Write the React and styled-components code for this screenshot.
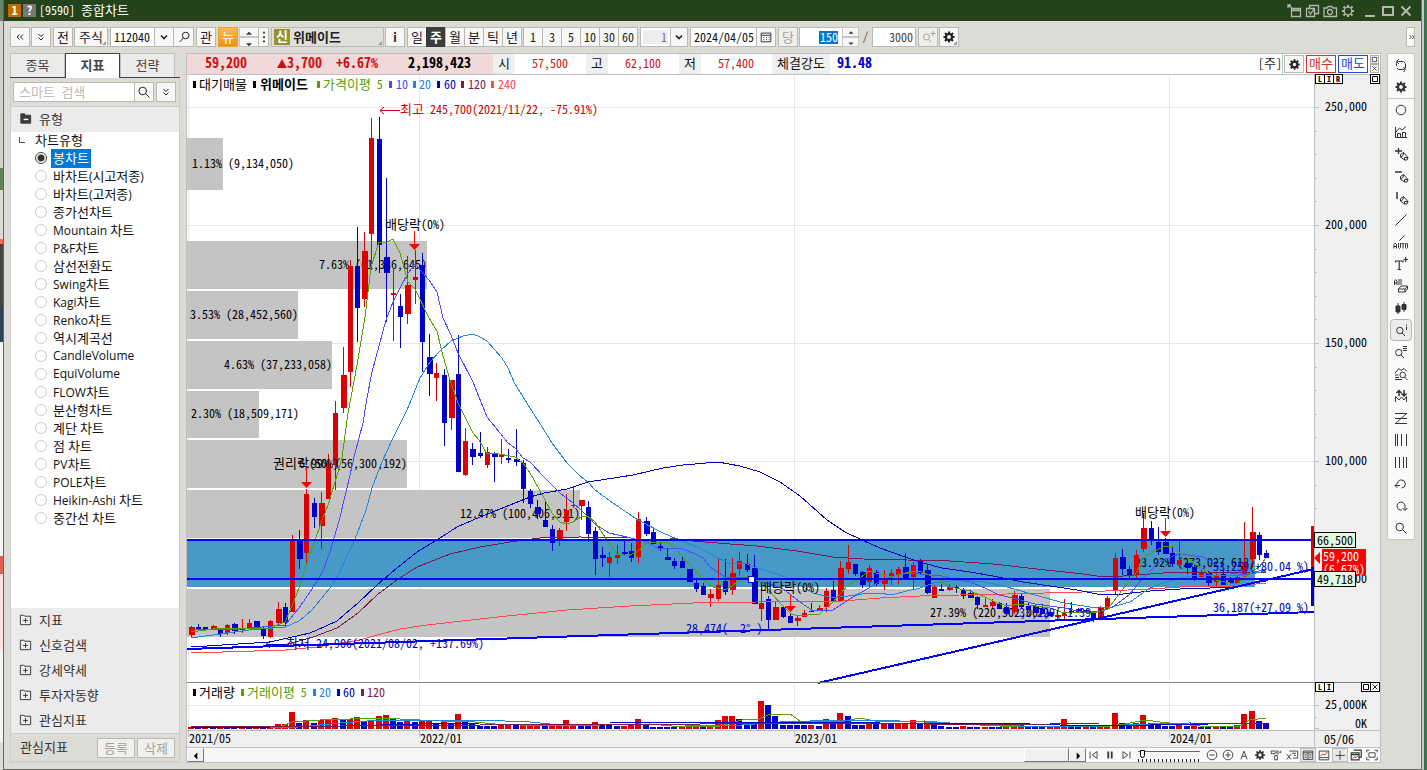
import React from "react";
import styled, { createGlobalStyle, css } from "styled-components";

const CJK = '"Noto Sans CJK KR", sans-serif';

const Global = createGlobalStyle`
  * { box-sizing: border-box; }
  body { margin: 0; background: #dcdbd5; }
  body, button, input, select {
    font-family: ${CJK};
    font-size: 12px;
    font-feature-settings: "hwid";
    color: #222;
  }
  button, input, select { margin: 0; border-radius: 0; padding: 0; }
`;

/* ---------- text: Hangul runs are set one size larger than Latin ---------- */
const Ko = styled.span`font-size: 13px;`;
const KoSvg = styled.tspan`font-size: 13px;`;
const HANGUL = /([\u3131-\uD79D]+)/;
function mix(text, Part = Ko) {
  return text.split(HANGUL).map((s, i) => (i % 2 ? <Part key={i}>{s}</Part> : s));
}

/* ---------- icons ---------- */
const GEAR = (
  <>
    <circle cx="8" cy="8" r="3" fill="none" strokeWidth="2.2" />
    <path strokeWidth="2" d="M8 2.500v2M8 11.500v2M2.500 8h2M11.500 8h2M4 4l1.500 1.500M10.500 10.500L12 12M12 4l-1.500 1.500M5.500 10.500L4 12" />
  </>
);
const PEN = <path d="M7.500 8.500l3-2 4.500 5-1 2.500-2.500 0L7.500 11zM10.500 6.500l-.5 3-2.500 1.500M11.500 14l0-2.500 3.500 0" />;
const ICONS = {
  dleft: <path d="M7.500 5.500L5 8l2.500 2.500M11 5.500L8.500 8l2.500 2.500" />,
  dright: <path d="M6 5.500L8.500 8 6 10.500M9.500 5.500L12 8l-2.500 2.500" />,
  ddown: <path d="M5.500 5L8 7.500 10.500 5M5.500 8.500L8 11l2.500-2.500" />,
  chev: <path strokeWidth="1.600" d="M5 6.500l3 3 3-3" />,
  search: <path d="M10.500 7a3.800 3.800 0 1 1-7.600 0 3.800 3.800 0 0 1 7.600 0M9.500 9.500l4 4" />,
  searchl: <path d="M13 6.500a3.300 3.300 0 1 1-6.600 0A3.300 3.300 0 0 1 13 6.500M7.500 9L3.500 13" />,
  gear: GEAR,
  gearo: (
    <>
      <circle cx="8" cy="8" r="3.800" strokeWidth="1.300" />
      <path strokeWidth="2" d="M8 2v2M8 12v2M2 8h2M12 8h2M3.500 3.500l1.500 1.500M11 11l1.500 1.500M12.500 3.500L11 5M5 11l-1.500 1.500" />
    </>
  ),
  up: <path d="M8 5l4 4H4z" fill="currentColor" stroke="none" />,
  down: <path d="M8 11L4 7h8z" fill="currentColor" stroke="none" />,
  left: <path d="M5.500 8l4-4v8z" fill="#000" stroke="none" />,
  right: <path d="M10.500 8l-4-4v8z" fill="#000" stroke="none" />,
  dots: <path d="M7 2h2v2H7zM7 7h2v2H7zM7 12h2v2H7z" fill="currentColor" stroke="none" />,
  cal: <path d="M2.500 3.500h11v10h-11zM2.500 6h11M5 8.500h1M8 8.500h1M11 8.500h1M5 11h1M8 11h1M11 11h1" />,
  wave: <path d="M9.500 8a3 3 0 1 1-6 0 3 3 0 0 1 6 0M8.500 10.500l3 2.500M10.500 4.500h5M13 2v5" />,
  folderM: <><path d="M3 3h4l1 1.500h5.500V13H3z" fill="#3c3c3c" stroke="#3c3c3c" /><path d="M6 9h5" stroke="#fff" strokeWidth="1.500" /></>,
  folderP: <path d="M2.500 3.500H6l1.500 1h6v9h-11zM8 6.500v5M5.500 9h5" />,
  send: <path strokeWidth="1.300" d="M5.500 5.500h9v8h-9zM5.500 7.500h9M8.500 5.500v2M11.500 5.500v2M6 5L2 2M2 5V2h3" />,
  copycheck: <path strokeWidth="1.300" d="M2.500 5.500h8v8h-8zM5.500 5V2.500h9v8H11M4.500 8l2 3 3.500-5" />,
  camera: <path strokeWidth="1.300" d="M2 5h3l1-1.500h4l1 1.500h3.500v8.500H2zM10.500 9a2.500 2.500 0 1 1-5 0 2.500 2.500 0 0 1 5 0" />,
  min: <path strokeWidth="2" d="M3 13h10" />,
  max: <path strokeWidth="2" d="M3 4h10v8H3z" />,
  close: <path strokeWidth="2" d="M3.500 3.500l9 9M12.500 3.500l-9 9" />,
  refresh: <path d="M3.500 9V6.500q0-2 2-2H10.500l2 2V8M6 2L3.500 4.500 6 7M12.500 7v3q0 2.500-2.500 2.500H5.500L4 11M10.500 10l2 2.500-2 2.500" />,
  circle: <circle cx="8" cy="8" r="4.800" />,
  chartbar: <path d="M2.500 3v10.500h11.500M4.500 13V9.500h3V13M9.500 13V8.500h3V13M3 8l3.500-4 2.500 2 4-3.500" />,
  penplus: <>{PEN}<path d="M2 5h7M5.500 2v6" strokeWidth="1.300" /></>,
  penminus: <>{PEN}<path strokeWidth="1.500" d="M2 4h7" /></>,
  penbar: <>{PEN}<path strokeWidth="1.500" d="M4 2v7" /></>,
  line: <path d="M2.500 13.500l11-11" />,
  auto: (
    <>
      <path d="M6.500 6.500l5-5" />
      <path d="M1 14.500v-4L2.200 9l1.300 1.500v4M1 12.500h2.500M5.500 9v4.500l1 1 1-1V9M8.500 9.500h3M10 9.500v5M12.500 10v3.500l1 1 1-1V10l-1-1z" />
    </>
  ),
  tplus: <path strokeWidth="1.200" d="M2.500 6.500V5h7.500v1.500M6.200 5v8.500M4.500 13.500h3.500M10.500 3.500H15M12.700 1v5" />,
  all: <path d="M1.500 7V3L2.700 1.500 4 3v4M1.500 5H4M6 1v6M8 1v6M5.500 11L8 8h6.500v3l-2.500 3H5.500zM5.500 11H12l2.500-3M12 11v3" />,
  candles: <><path d="M5 3v11M11 2v10" /><path d="M3 6h4v6H3zM9 4.500h4v5H9z" fill="currentColor" /></>,
  magi: <path d="M10 8.500a3.200 3.200 0 1 1-6.400 0 3.200 3.200 0 0 1 6.400 0M9 11l3 3M13.500 2.500v1M13.500 4.500v3.500" />,
  maglist: <path d="M9 8.500a3.200 3.200 0 1 1-6.400 0 3.200 3.200 0 0 1 6.400 0M8 11l3 3M10 2.500h4M10 4.500h4M10 6.500h4" />,
  magchart: <path d="M2 7l4-4.500 2 2 3-2 3 3M12.500 9a2.800 2.800 0 1 1-5.600 0 2.800 2.800 0 0 1 5.600 0M11.500 11l3 3M2 9h3M2 11.500h4M2 13.500h7" />,
  updown: <><path d="M6 8V2.500M3.500 5L6 2.500 8.500 5M11 2v5.500M8.500 5.500L11 8l2.500-2.500" strokeWidth="1.500" /><path d="M2.500 14V8.500l3.500 3.500 2.500-3 2.500 3 2.500-3.500V14" /></>,
  fibz: <path d="M2 3.500h12M2 8.500h12M2 13.500h12M13.500 3.500l-11 10" />,
  bars3: <path d="M2.500 2v12M4.500 2v12M8.500 2v12M13.500 2v12" />,
  bars4: <path d="M2.500 3v11M6.500 3v11M10.500 3v11M13.500 3v11" />,
  undo: <path d="M4.500 7a4 4 0 1 1 4 5M2 9.500h5M4.500 7L2 9.500 4.500 12" />,
  redo: <path d="M9 12a4 4 0 1 1 3-4.500V12M9.500 10l2.500 2.500L14.500 10" />,
  first: <path d="M3.500 4v8M11.500 4v8L6 8z" />,
  pause: <path strokeWidth="2" d="M6 4v8M10 4v8" />,
  last: <path d="M12.500 4v8M4.500 4v8L10 8z" />,
  minus: <path d="M13.500 8a5.500 5.500 0 1 1-11 0 5.500 5.500 0 0 1 11 0M5 8h6" />,
  plus: <path d="M13.500 8a5.500 5.500 0 1 1-11 0 5.500 5.500 0 0 1 11 0M5 8h6M8 5v6" />,
  letterA: <path d="M4.500 13L8 3.500l3.500 9.500M6 9.500h4" />,
  hammer: <path d="M2.500 3.500h8l2 2M2.500 3.500v3h4v-1h4v2M6.500 8.500h3v5h-3zM13.500 3v3" />,
  win: <path d="M5 3.500h9.500v8H9M2 7l5 6M7 7l-5 6M8 6h4.500M10 8.500h2.500" />,
  table: <path d="M2.500 3.500h11v9.500h-11zM2.500 5.500h11M8 5.500V13M4 8h2.500M4 10.500h2.500M9.500 8H12M9.500 10.500H12" />,
  miniChart: <><path d="M2.500 3.500h11v10h-11z" /><path d="M4 9l2.500-2 2 1 4-4" stroke="#d00000" /><path d="M3 11h10" /></>,
  cross: <path d="M8 3v10.500M3 8.500h10.500" />,
  layers: <><path d="M5.500 2.500h8.500v8h-2M2.500 5.500h9v8h-9zM2.500 7.500h9" strokeWidth="1.300" /><path d="M4 12l2-2 2 1 2-2" stroke="#d00000" /></>,
  full: <path d="M4.500 5.500h7v5h-7zM2 5V2.500h3M11 2.500h3V5M2 10.500v3h3M11 13.500h3v-3" />,
  box: <path strokeWidth="2" d="M3 3h10v10H3z" />,
  x: <path strokeWidth="1.800" d="M3 3l10 10M13 3L3 13" />,
};
const Svg = styled.svg`
  width: ${(p) => p.$s}px;
  height: ${(p) => p.$s}px;
  flex: none;
  display: block;
  fill: none;
  stroke: currentColor;
`;
function Icon({ n, s = 16 }) {
  return <Svg $s={s} viewBox="0 0 16 16" aria-hidden="true">{ICONS[n]}</Svg>;
}

/* ---------- window frame ---------- */
const Desktop = styled.div`
  display: flex;
  min-height: 100vh;
`;
const LeftEdge = styled.div`
  width: 4px;
  border-right: 1px solid #66665f;
  background: linear-gradient(
    #6b8468 0 21px, #d4d2cc 21px 168px, #5f8257 168px 190px, #dcdbd5 190px 239px,
    #ff6a50 239px 244px, #444 244px 306px, #2c4257 306px 342px, #f4f4f4 342px 556px,
    #e06050 556px 574px, #ffe4e4 574px 650px, #f4f4f4 650px 742px, #dcdbd5 742px
  );
`;
const RightEdge = styled.div`
  width: 6px;
  background: linear-gradient(90deg, #6e6e6e 0 1px, #c6c8cc 1px 3px, #5a5a60 3px 4px, #0f9447 4px);
`;
const Window = styled.div`
  flex: 1;
  min-width: 0;
  display: flex;
  flex-direction: column;
  background: #dcdbd5;
  border-bottom: 1px solid #66665f;
`;
const TitleBar = styled.header`
  height: 21px;
  display: flex;
  align-items: center;
  gap: 2px;
  padding: 0 7px 0 4px;
  background: #24431b;
  color: #fff;
`;
const Tag = styled.span`
  width: 13px;
  height: 13px;
  line-height: 12px;
  text-align: center;
  font-weight: 700;
  color: #fff;
  background: ${(p) => p.$bg};
`;
const Title = styled.h1`
  margin: 0 auto 0 1px;
  padding-bottom: 2px;
  font-size: 12px;
  font-weight: 400;
`;
const TitleBtn = styled.button`
  display: grid;
  place-items: center;
  width: 16px;
  height: 16px;
  border: 0;
  background: none;
  color: #b4b9b0;
`;
const Spacer = styled.span`width: ${(p) => p.$w}px; flex: none;`;

/* ---------- toolbar ---------- */
const Toolbar = styled.div`
  height: 32px;
  padding: 6px 6px;
  display: flex;
  gap: 1px;
  > :last-child { margin-left: auto; }
`;
const Btn = styled.button`
  position: relative;
  display: flex;
  align-items: center;
  justify-content: center;
  flex: none;
  width: ${(p) => p.$w || 20}px;
  height: ${(p) => p.$h || 20}px;
  padding-bottom: ${(p) => (p["aria-label"] ? 0 : 1)}px;
  border: 1px solid #b9b9b4;
  background: #f7f7f7;
  color: #222;
  ${(p) => p.$dim && css`color: #a5a295; background: #efefee;`}
  ${(p) => p.$orange && css`color: #fff; border-color: #e8a030; background: linear-gradient(#fbb95a, #ee9208);`}
  ${(p) => p.$left && css`justify-content: flex-start; padding-left: 2px; font-weight: 700; gap: 3px; background: #e0dfda;`}
  ${(p) => p.$corner && css`
    &::after {
      content: "";
      position: absolute;
      right: 1px;
      bottom: 1px;
      border: 2px solid transparent;
      border-right-color: #999;
      border-bottom-color: #999;
    }
  `}
`;
const Group = styled.div`
  display: flex;
  flex: none;
  margin: 0 ${(p) => p.$r || 0}px 0 ${(p) => p.$l || 0}px;
  > * + * { margin-left: -1px; }
`;
const Seg = styled(Btn)`
  padding-bottom: 1px;
  ${(p) => p.$on && css`background: #3c3c3c; border-color: #3c3c3c; color: #fff; font-weight: 700;`}
`;
const Field = styled.input`
  width: ${(p) => p.$w}px;
  height: 20px;
  padding: 0 2px 2px 3px;
  border: 1px solid #b9b9b4;
  background: #fff;
  color: ${(p) => p.$color || "#111"};
  text-align: ${(p) => (p.$right ? "right" : "left")};
`;
const SelectedField = styled.label`
  display: flex;
  justify-content: flex-end;
  align-items: center;
  width: 44px;
  height: 20px;
  padding-right: 4px;
  border: 1px solid #b9b9b4;
  background: #fff;
  input {
    width: 19px;
    height: 13px;
    padding-bottom: 1px;
    border: 0;
    background: #0078d7;
    color: #fff;
    text-align: right;
  }
`;
const NumSelect = styled.select`
  appearance: none;
  width: 31px;
  height: 20px;
  padding: 0 4px 1px 20px;
  border: 1px solid #b9b9b4;
  outline: 2px solid #fff;
  outline-offset: -3px;
  background: #ededed;
  color: #777;
`;
const Spin = styled.div`
  display: grid;
  grid-template-rows: 10px 10px;
  width: ${(p) => p.$w}px;
  button {
    display: grid;
    place-items: center;
    overflow: hidden;
    border: 1px solid #c6c6c2;
    background: #f7f7f7;
    color: #333;
  }
`;
const Badge = styled.span`
  width: 16px;
  height: 16px;
  line-height: 14px;
  text-align: center;
  color: #fff;
  background: #97912f;
`;
const Slash = styled.span`
  width: 11px;
  text-align: center;
  line-height: 18px;
  color: #555;
`;

/* ---------- body ---------- */
const Body = styled.div`
  flex: 1;
  display: flex;
  gap: 6px;
  padding: 0 6px 6px;
  align-items: stretch;
`;
const Sidebar = styled.aside`
  flex: none;
  width: 170px;
  display: flex;
  flex-direction: column;
  color: #333;
`;
const Tabs = styled.div`
  height: 25px;
  display: flex;
  border-bottom: 1px solid #444;
`;
const Tab = styled.button`
  width: 55px;
  height: ${(p) => (p.$on ? 25 : 24)}px;
  padding-bottom: 3px;
  border: 1px solid ${(p) => (p.$on ? "#444" : "#c0c0bc")};
  border-bottom: 0;
  background: ${(p) => (p.$on ? "#fff" : "#ebebeb")};
  color: #444;
  font-weight: ${(p) => (p.$on ? 700 : 400)};
`;
const SearchRow = styled.div`
  height: 28px;
  padding: 4px 3px 4px 2px;
  display: flex;
  border: 1px solid #ccc;
  border-width: 0 1px;
  > :last-child { margin-left: 2px; }
  input { flex: 1; min-width: 0; padding-left: 5px; border-right: 0; }
  input::placeholder { color: #bbb; font-size: 13px; opacity: 1; }
`;
const Section = styled.button`
  display: flex;
  align-items: center;
  gap: 6px;
  flex: none;
  width: 100%;
  height: ${(p) => (p.$open ? 26 : 25)}px;
  padding: 0 0 2px 7px;
  border: 1px solid #ccc;
  border-width: ${(p) => (p.$open ? "1px 1px 0" : "0 1px")};
  background: #ebebeb;
  color: #333;
`;
const Tree = styled.div`
  flex: 1;
  padding-left: 24px;
  border: 1px solid #ccc;
  border-width: 0 1px;
  background: #fff;
  font-family: "Open Sans", ${CJK};
  font-feature-settings: normal;
  color: #111;
`;
const TreeHead = styled.div`
  position: relative;
  height: 17px;
  line-height: 16px;
  &::before {
    content: "";
    position: absolute;
    left: -16px;
    top: 5px;
    width: 5px;
    height: 5px;
    border: 1px solid #555;
    border-width: 0 0 1px 1px;
  }
`;
const Option = styled.label`
  display: flex;
  align-items: center;
  height: 18px;
  gap: 4px;
  line-height: 18px;
  input {
    appearance: none;
    width: 12px;
    height: 12px;
    border: 1px solid #ccc;
    border-radius: 50%;
    background: #fff;
  }
  input:checked {
    border-color: #444;
    background: radial-gradient(circle, #333 0 3px, #fff 4px);
  }
  input:checked + span { background: #0078d7; color: #fff; }
  > span { padding: 0 2px; white-space: nowrap; }
`;
const Foot = styled.div`
  height: 30px;
  display: flex;
  align-items: center;
  gap: 2px;
  padding: 0 4px 0 9px;
  border: 1px solid #ccc;
  border-bottom: 2px solid #d0d0cc;
  > :first-child { margin-right: auto; padding-bottom: 2px; }
`;

const Main = styled.main`
  flex: 1;
  min-width: 0;
  display: flex;
  flex-direction: column;
  border: 1px solid #c0c0c0;
  background: #fff;
`;
const InfoBar = styled.div`
  display: flex;
  height: 21px;
  line-height: 17px;
  border-bottom: 1px solid #c0c0c0;
  white-space: nowrap;
`;
const Quote = styled.div`
  display: flex;
  flex: none;
  width: 306px;
  background: #f2d9d9;
  font-size: 14px;
  font-weight: 700;
`;
const QuoteCell = styled.span`
  width: ${(p) => p.$w}px;
  text-align: right;
  color: ${(p) => (p.$black ? "#000" : "#d01010")};
`;
const Tri = styled.i`
  display: inline-block;
  border: 5px solid transparent;
  border-top: 0;
  border-bottom: 9px solid #d01010;
`;
const Head = styled.span`
  flex: none;
  width: ${(p) => p.$w || 22}px;
  text-align: center;
  background: #efefef;
  color: #111;
`;
const Val = styled.span`
  flex: none;
  width: 71px;
  padding-right: 18px;
  text-align: right;
  color: #d01010;
`;
const Strength = styled.span`
  margin: 0 auto 0 7px;
  font-size: 14px;
  font-weight: 700;
  color: #0000c8;
`;
const Actions = styled.div`
  display: flex;
  gap: 2px;
  padding: 1px;
  border-left: 1px solid #c0c0c0;
`;
const Order = styled.button`
  width: 30px;
  height: 18px;
  line-height: 14px;
  padding-bottom: 2px;
  border: 1px solid currentColor;
  background: #fff;
  color: ${(p) => p.$c};
`;
const Mini = styled.div`
  display: grid;
  grid-template-rows: 9px 9px;
  button {
    display: grid;
    place-items: center;
    width: 9px;
    border: 1px solid #aaa;
    background: #fff;
    color: #333;
  }
`;

const ChartArea = styled.div`
  position: relative;
  flex: 1;
  > svg { display: block; width: 100%; height: auto; }
`;
const Plot = styled.svg`
  text { font-family: ${CJK}; font-size: 12px; font-feature-settings: "hwid"; white-space: pre; }
`;
const PaneBtns = styled.div`
  position: absolute;
  right: ${(p) => p.$right};
  top: ${(p) => p.$top}px;
  display: flex;
  button {
    display: grid;
    place-items: center;
    width: 10px;
    height: 10px;
    border: 1px solid #000;
    background: #fff;
    color: #000;
    font-size: 8px;
    font-weight: 700;
    line-height: 8px;
  }
  button + button { margin-left: -1px; }
`;

const ScrollRow = styled.div`
  height: 14px;
  display: flex;
`;
const ScrollBtn = styled.button`
  display: grid;
  place-items: center;
  overflow: hidden;
  width: 17px;
  border: 1px solid #fff;
  border-right-color: #777;
  border-bottom-color: #777;
  background: #f0f0f0;
`;
const Track = styled.div`
  flex: 1;
  display: flex;
  justify-content: flex-end;
  background: #f6f6f6;
`;
const Thumb = styled.div`
  width: 45px;
  border: 1px solid #fff;
  border-right-color: #777;
  border-bottom-color: #777;
  background: #f0f0f0;
`;
const ToolBtn = styled.button`
  display: grid;
  place-items: center;
  overflow: hidden;
  width: 16px;
  border: 0;
  background: ${(p) => (p.$on ? "#e9e9e9" : "#fafafa")};
  box-shadow: ${(p) => (p.$on ? "inset 0 0 0 1px #bbb" : "none")};
  color: #333;
`;
const SlideWrap = styled.label`
  width: 70px;
  padding: 2px 4px 0;
  background: #fafafa;
  input {
    appearance: none;
    display: block;
    width: 62px;
    height: 12px;
    background:
      linear-gradient(#666, #666) 0 1px / 100% 1px no-repeat,
      repeating-linear-gradient(90deg, #222 0 1px, transparent 1px 4px) 0 100% / 100% 3px no-repeat;
  }
  input::-webkit-slider-thumb {
    appearance: none;
    width: 5px;
    height: 8px;
    margin-bottom: 4px;
    border: 1px solid #000;
    border-radius: 0 0 3px 3px;
    background: #fff;
  }
`;

const Rail = styled.nav`
  flex: none;
  align-self: flex-start;
  width: 28px;
  border: 1px solid #c6c6c2;
  background: #fafafa;
  display: flex;
  flex-direction: column;
  align-items: center;
`;
const RailBtn = styled.button`
  display: grid;
  place-items: center;
  width: ${(p) => (p.$on ? 22 : 26)}px;
  height: 22px;
  border: ${(p) => (p.$on ? "1px solid #b4b4b4" : "0")};
  border-radius: ${(p) => (p.$on ? 4 : 0)}px;
  background: ${(p) => (p.$on ? "#ececec" : "none")};
  color: #333;
`;
const RailLine = styled.hr`
  width: 100%;
  margin: 0;
  border: 0;
  border-top: 1px solid #c6c6c2;
`;

/* ---------- chart data: colour, high, body top, body bottom, low ---------- */
const CANDLES = `R626,627,635,637 B624,627,629,629 B627,627,629,630 R625,626,629,630 B628,628,634,637 R624,625,633,635 B623,624,631,634 R619,628,630,633 R619,623,628,630 B621,621,628,629
B627,628,636,639 R620,621,637,638 R602,609,623,624 B603,607,622,627 R535,540,612,612 B530,540,559,569 R489,494,553,563 B498,503,517,528 R492,503,526,549 R454,464,499,499
R401,413,465,490 R347,375,408,413 R260,266,372,387 B227,266,308,342 R232,251,299,307 R118,138,234,270 B117,139,245,273 B178,257,273,322 R268,293,295,341 B294,306,317,348
R256,285,314,324 R250,277,280,304 B253,265,342,372 B334,357,374,396 R363,373,378,401 B369,375,423,446 R380,380,418,430 B335,374,472,472 R428,441,475,476 B443,449,457,465
B432,453,456,458 R447,452,465,468 B452,453,457,482 R439,455,457,464 B449,458,460,463 B429,459,462,466 B460,463,489,503 B489,491,504,508 B500,507,514,519 B501,520,527,527
B525,529,543,551 R528,530,539,546 R494,510,522,531 R487,505,506,508 R500,500,506,520 B501,507,534,542 B527,531,559,575 B547,555,558,567 R552,557,563,577 R545,555,558,564
B540,552,554,556 B543,551,558,562 R512,519,557,563 B517,521,534,536 B528,532,544,544 B542,546,549,551 B549,557,560,560 B558,561,566,569 B557,561,568,568 B569,569,582,582
B580,583,589,592 B583,586,595,595 R589,594,598,607 R558,585,599,601 B559,581,592,595 R558,573,590,595 R552,561,569,576 B554,564,570,572 B555,568,604,604 R587,603,609,621
B596,599,620,630 R602,607,620,620 B606,607,617,618 B614,616,623,623 R615,618,621,626 R610,613,617,617 B603,611,612,612 R605,608,610,610 R588,591,607,612 B581,590,601,601
R561,568,601,601 R545,562,569,574 B564,564,574,576 B571,572,585,588 R565,568,582,587 B570,572,584,586 R570,580,584,590 R569,573,577,585 R567,569,575,584 B553,567,578,578
R562,565,577,589 B559,560,573,574 B564,570,593,594 R585,587,598,598 B584,589,591,591 R584,587,590,591 B585,587,588,593 B588,590,596,599 B590,593,598,598 B596,597,605,609
R597,605,607,607 R599,602,606,608 B602,603,609,609 B603,607,614,614 R591,595,612,614 B593,596,607,609 B603,606,610,610 B604,606,613,613 B604,609,614,614 B611,612,616,616
R610,615,617,620 R599,614,616,619 B602,611,612,614 B608,609,612,612 B609,610,612,612 B611,613,619,622 R606,608,617,617 R596,598,609,609 R553,558,591,594 B549,557,569,575
B566,569,576,578 R550,555,575,580 R513,528,549,552 B521,528,540,545 B527,542,552,555 B538,542,554,554 B546,553,564,567 R541,560,565,565 B560,563,568,574 B565,567,578,581
R570,573,577,577 B571,573,583,586 R572,575,582,586 B571,574,585,585 B577,579,583,583 R575,577,583,583 R522,562,575,577 R507,532,559,567 B532,535,555,560 B550,553,558,558`
  .split(/\s+/)
  .map((s) => [s[0], ...s.slice(1).split(",").map(Number)]);

const VOLUME = `R2 B2 R2 B2 R2 B2 B2 R2 B2 R2 B2 R2 R5 R5 R17 B6 R9 B6 R9 R10 R11 B10 R10 R12 B8 R9 R13 R14 B10 B7 R9 B7 R8 R8 B6 R9 B6 R15 B9 B5
B3 B3 B3 R5 R5 B4 R4 R4 R4 B4 R5 R4 R9 R5 B4 B4 R7 B5 B5 B3 R3 R5 R10 B5 B2 B2 B2 B2 R2 R2 R2 B2 R3 R9 R13 R13 B10 B6 B6 R28
B24 B13 B4 B4 B4 B4 R4 B3 R10 B7 R16 B13 B4 B4 R7 B6 R6 B6 R6 R6 R9 B6 R8 B4 B3 B2 B2 R3 B2 B2 R2 B2 B2 R2 R2 R4 B2 B2 B2 R2
R3 R10 B3 B2 R2 B2 R2 R3 R16 B6 B3 R6 R14 B6 B6 B3 B3 R4 B3 R3 B2 B2 R2 B2 B2 R4 R15 R18 B8 B6`
  .split(/\s+/)
  .map((s) => [s[0], Number(s.slice(1))]);

const xAt = (i) => Math.round(191 + i * 7.215);
const tone = (c) => (c === "R" ? "#dc0000" : "#0000c8");

const GREEN = "#57a000", VIOLET = "#4b4bff", SKY = "#1e87d7", NAVY = "#0000c8", WINE = "#7a1b50", CORAL = "#ff4848";

const PRICE_LINES = [
  [CORAL, "191,653 285,650 317,647 360,640 377,635 400,629 427,625 480,619 507,616 567,610 630,606 693,603 757,602 843,601 880,598 920,596 960,595 1007,594 1083,592 1150,589 1180,587 1237,586 1266,583"],
  [WINE, "285,645 313,637 337,628 358,613 377,595 397,580 417,567 450,554 480,547 510,542 540,538 580,537 627,538 670,538 693,541 730,544 757,546 797,551 833,557 863,559 907,560 950,561 993,564 1037,569 1083,574 1097,576 1123,576 1163,573 1266,572"],
  [NAVY, "191,647 270,642 310,633 317,630 337,621 358,603 377,585 397,568 417,552 440,538 457,527 480,517 515,503 530,497 544,493 567,489 588,482 633,475 663,468 683,465 718,462 740,466 760,472 780,482 800,496 827,520 845,532 862,540 880,548 905,557 923,563 942,568 970,572 993,576 1023,582 1050,586 1077,590 1097,594 1123,594 1150,591 1180,589 1210,588 1233,587 1266,581"],
  [SKY, "191,638 220,634 249,630 285,627 299,621 312,610 330,588 338,575 350,550 355,539 366,510 372,488 382,462 393,438 407,410 420,378 430,362 440,351 451,341 463,336 473,334 480,337 487,341 502,358 508,368 515,384 530,408 544,430 552,443 567,463 580,476 588,482 595,490 613,503 638,520 663,533 677,539 697,547 713,555 728,563 747,564 754,567 780,575 797,583 813,593 833,598 848,596 862,594 880,593 891,595 907,591 920,588 934,583 960,580 985,582 1007,587 1035,595 1064,603 1090,607 1108,608 1130,602 1150,588 1163,583 1180,578 1197,575 1245,575 1266,571"],
  [VIOLET, "191,629 240,629 285,625 299,608 310,592 322,573 330,552 339,521 347,488 355,453 363,423 367,398 372,372 386,320 393,302 400,288 408,273 415,264 422,272 429,280 437,292 443,318 451,335 458,353 473,382 487,417 500,433 508,443 515,448 523,458 530,462 544,477 560,493 573,503 581,510 595,524 609,533 627,537 647,542 657,548 680,548 693,553 703,558 710,567 725,577 750,578 763,582 782,588 800,602 813,611 833,610 848,600 862,592 877,583 891,577 905,573 920,574 942,576 957,580 970,582 985,588 999,595 1013,598 1035,604 1064,608 1078,611 1100,612 1113,607 1129,595 1143,578 1158,563 1173,556 1180,554 1203,557 1217,565 1230,573 1245,575 1266,569"],
  [GREEN, "191,632 213,629 234,628 270,628 277,625 285,622 292,606 299,588 308,560 314,543 321,523 328,505 335,482 342,458 348,413 357,365 365,317 371,267 379,242 387,242 393,239 400,253 408,282 415,289 429,318 437,331 442,352 450,380 458,403 473,433 479,440 487,454 494,453 515,457 523,463 530,473 544,498 552,513 560,522 567,524 573,522 581,517 588,516 595,522 609,543 617,554 627,556 637,552 646,544 653,542 667,542 675,548 689,564 703,579 713,587 725,590 732,586 740,580 747,576 754,579 763,583 773,595 783,606 790,613 797,616 820,614 826,608 833,602 840,594 848,585 860,578 869,571 880,574 890,577 905,573 920,571 934,577 950,587 970,591 985,597 997,603 1007,606 1021,604 1035,606 1050,608 1064,613 1097,612 1108,609 1122,590 1135,575 1144,557 1153,552 1165,546 1173,546 1180,553 1194,563 1209,574 1216,580 1230,583 1238,583 1245,577 1259,567 1266,558"],
];
const VOLUME_LINES = [
  [GREEN, "191,728 280,727 292,722 320,720 380,718 420,720 440,721 475,722 495,724 520,725 600,725 650,724 672,726 720,726 735,722 745,719 757,720 770,714 790,714 800,721 840,722 860,718 880,722 925,721 960,724 1000,726 1110,726 1125,724 1145,720 1160,722 1180,724 1200,726 1240,726 1250,720 1266,718"],
  [SKY, "191,728 300,727 340,723 380,720 480,720 530,722 560,725 640,724 730,726 780,722 840,720 900,721 950,723 1020,726 1100,726 1150,724 1190,723 1266,724"],
  [NAVY, "191,727 270,727 340,726 420,724 480,723 610,723 760,722 880,723 1000,723 1060,725 1150,725 1266,723"],
  [WINE, "191,727 340,726 480,725 700,724 860,723 1000,725 1100,723 1190,723 1266,723"],
];

const BANDS = [
  [138, 52, 223, 192, 168, "1.13% (9,134,050)"],
  [241, 48, 427, 319, 269, "7.63% (61,386,645)"],
  [291, 48, 298, 190, 319, "3.53% (28,452,560)"],
  [341, 48, 332, 224, 369, "4.63% (37,233,058)"],
  [391, 47, 259, 191, 418, "2.30% (18,509,171)"],
  [440, 48, 407, 299, 468, "6.99% (56,300,192)"],
  [490, 48, 580, 460, 518, "12.47% (100,406,911)"],
  [589, 48, 1050, 930, 617, "27.39% (220,502,067)"],
];
const LEGEND = [
  [193, 199, "대기매물", "#000"],
  [253, 260, "위메이드", "#000", 700],
  [317, 323, "가격이평 5", GREEN],
  [389, 396, "10", VIOLET],
  [413, 419, "20", SKY],
  [437, 444, "60", NAVY],
  [461, 468, "120", WINE],
  [491, 498, "240", CORAL],
];
const VLEGEND = [
  [193, 199, "거래량", "#000"],
  [241, 247, "거래이평 5", GREEN],
  [313, 319, "20", SKY],
  [337, 343, "60", NAVY],
  [361, 367, "120", WINE],
];
const EVENTS = [
  [273, 468, "권리락(50%)", 306, 467, 488],
  [385, 229, "배당락(0%)", 414, 231, 250],
  [760, 592, "배당락(0%)", 790, 594, 612],
  [1135, 517, "배당락(0%)", 1165, 518, 537],
];

function Legend({ items, y }) {
  return items.map(([sx, tx, t, c, w]) => (
    <g key={t} fill={c}>
      <rect x={sx} y={y - 8} width="3" height="7" />
      <text x={tx} y={y} fontWeight={w}>{mix(t, KoSvg)}</text>
    </g>
  ));
}

function Chart() {
  const years = [188, 419, 794, 1169];
  return (
    <Plot viewBox="187 75 1193 673" role="img" aria-label="위메이드 주봉 차트">
      <rect x="187" y="75" width="1193" height="673" fill="#fff" />
      <rect x="1314" y="75" width="66" height="673" fill="#efefef" />
      <rect x="187" y="730" width="1193" height="18" fill="#efefef" />
      <g fill="#e6e6e6">
        {[107, 225, 343, 461, 705].map((y) => <rect key={y} x="188" y={y} width="1126" height="1" />)}
        {years.map((x) => (
          <React.Fragment key={x}>
            <rect x={x} y="76" width="1" height="604" />
            <rect x={x} y="684" width="1" height="46" />
          </React.Fragment>
        ))}
      </g>
      <g fill="#c4c4c4">
        {BANDS.map(([y, h, r]) => <rect key={y} x="187" y={y} width={r - 187} height={h} />)}
      </g>
      <rect x="187" y="541" width="1068" height="46" fill="#4899c8" />
      <g fill="#000">
        {BANDS.map(([y, , , tx, ty, t]) => <text key={y} x={tx} y={ty}>{t}</text>)}
        <text x="1135" y="567">23.92% (273,027,618)</text>
      </g>
      <g shapeRendering="crispEdges">
        {CANDLES.map(([c, h, t, b, l], i) => (
          <g key={i} fill={tone(c)}>
            <rect x={xAt(i)} y={h} width="1" height={Math.max(1, l - h)} />
            <rect x={xAt(i) - 2} y={t} width={i % 3 ? 5 : 6} height={Math.max(1, b - t)} />
          </g>
        ))}
        {PRICE_LINES.map(([c, pts]) => <polyline key={c} points={pts} fill="none" stroke={c} />)}
        {VOLUME.map(([c, h], i) => (
          <rect key={i} x={xAt(i) - 3} y={729 - h} width="6" height={h} fill={tone(c)} />
        ))}
        {VOLUME_LINES.map(([c, pts]) => <polyline key={c} points={pts} fill="none" stroke={c} />)}
        <g stroke="#0000ff" strokeWidth="2">
          <path d="M187 540H1314M187 579H1314" />
          <path d="M187 649L1314 612M818 683L1314 569" />
        </g>
        <rect x="748" y="576" width="6" height="6" fill="#fff" stroke="#0000ff" />
        <rect x="1311" y="526" width="3" height="41" fill="#dc0000" />
        <rect x="1311" y="567" width="3" height="39" fill="#0000c8" />
      </g>
      {EVENTS.map(([tx, ty, t, ax, a0, a1]) => (
        <g key={tx}>
          <text x={tx} y={ty}>{mix(t, KoSvg)}</text>
          <path d={`M${ax} ${a0}h1v${a1 - a0 - 6}h5l-5.500 6-5.500-6h5z`} fill="#ff0000" />
        </g>
      ))}
      <Legend items={LEGEND} y={89} />
      <Legend items={VLEGEND} y={697} />
      <g fill="#d00000">
        <path d="M380 110.500H400M384 107l-4 3.500 4 3.500" fill="none" stroke="#d00000" />
        <text x="400" y="114">{mix("최고 245,700(2021/11/22, -75.91%)", KoSvg)}</text>
      </g>
      <g fill="#0000c8">
        <path d="M266 644.500H286M270 641l-4 3.500 4 3.500" fill="none" stroke="#0000c8" />
        <text x="286" y="648">{mix("최저 24,906(2021/08/02, +137.69%)", KoSvg)}</text>
        <text x="686" y="633">{"28,474(  2"}<tspan dx="0">°</tspan>{" )"}</text>
        <text x="1019" y="617">33,229(-1.39 )</text>
        <text x="1213" y="571">53,259(+80.04 %)</text>
        <text x="1213" y="612">36,187(+27.09 %)</text>
      </g>

      <rect x="187" y="682" width="1193" height="1" fill="#808080" />
      <g fill="#c0c0c0">
        <rect x="1314" y="75" width="1" height="673" />
        <rect x="187" y="730" width="1193" height="1" />
        <rect x="187" y="747" width="1193" height="1" />
        {Array.from({ length: 21 }, (_, k) => (
          <rect key={k} x="1315" y={107 + Math.round(k * 23.6)} width={k % 5 ? 2 : 4} height="1" />
        ))}
        <rect x="1315" y="705" width="4" height="1" />
        <rect x="1315" y="717" width="2" height="1" />
        <rect x="1315" y="728" width="4" height="1" />
        {years.map((x) => <rect key={x} x={x} y="731" width="1" height="6" />)}
      </g>
      <g fill="#000">
        <text x="1325" y="111">250,000</text>
        <text x="1325" y="229">200,000</text>
        <text x="1325" y="347">150,000</text>
        <text x="1325" y="465">100,000</text>
        <text x="1325" y="583"> 50,000</text>
        <text x="1325" y="709">25,000K</text>
        <text x="1355" y="728">0K</text>
        <text x="189" y="743">2021/05</text>
        <text x="420" y="743">2022/01</text>
        <text x="795" y="743">2023/01</text>
        <text x="1170" y="743">2024/01</text>
        <text x="1324" y="744">05/06</text>
      </g>
      <path d="M1320 552v12l-6-6z" fill="#ff0000" />
      <rect x="1322" y="549" width="44" height="27" fill="#ff0000" />
      <text x="1323" y="561" fill="#fff">59,200</text>
      <text x="1323" y="574" fill="#fff">(6.67%)</text>
      <g fill="#e1fbe1" stroke="#000">
        <rect x="1314.500" y="532.500" width="41" height="15" />
        <rect x="1314.500" y="571.500" width="41" height="15" />
      </g>
      <text x="1317" y="545">66,500</text>
      <text x="1317" y="584">49,718</text>
    </Plot>
  );
}

const TYPES = ["봉차트", "바차트(시고저종)", "바차트(고저종)", "종가선차트", "Mountain 차트", "P&F차트", "삼선전환도", "Swing차트", "Kagi차트", "Renko차트", "역시계곡선", "CandleVolume", "EquiVolume", "FLOW차트", "분산형차트", "계단 차트", "점 차트", "PV차트", "POLE차트", "Heikin-Ashi 차트", "중간선 차트"];
const RAIL = ["circle", "chartbar", "penplus", "penminus", "penbar", "line", "auto", "tplus", "all", "candles", "magi", "maglist", "magchart", "updown", "fibz", "bars3", "bars4", "undo", "redo", "search"];
const BOTTOM = ["minus", "plus", "letterA", "gear", "hammer", "win", "table", "miniChart", "cross", "layers", "full"];

export default function App() {
  return (
    <>
      <Global />
      <Desktop>
        <LeftEdge />
        <Window>
          <TitleBar>
            <Tag $bg="#c46a00">1</Tag>
            <Tag $bg="#777">?</Tag>
            <Title>{mix("[9590] 종합차트")}</Title>
            {["send", "copycheck", "camera", "gearo"].map((n) => (
              <TitleBtn key={n} aria-label={n}><Icon n={n} s={16} /></TitleBtn>
            ))}
            <Spacer $w={2} />
            {["min", "max", "close"].map((n) => (
              <TitleBtn key={n} aria-label={n}><Icon n={n} s={16} /></TitleBtn>
            ))}
          </TitleBar>

          <Toolbar>
            <Btn aria-label="접기"><Icon n="dleft" /></Btn>
            <Btn aria-label="펼치기"><Icon n="ddown" /></Btn>
            <Spacer />
            <Btn>{mix("전")}</Btn>
            <Btn $w={34} $corner>{mix("주식")}</Btn>
            <Group $l={1}>
              <Field $w={45} defaultValue="112040" aria-label="종목코드" />
              <Btn $w={20} aria-label="목록"><Icon n="chev" /></Btn>
              <Btn $w={21} aria-label="종목검색"><Icon n="searchl" /></Btn>
            </Group>
            <Spacer />
            <Btn>{mix("관")}</Btn>
            <Spacer />
            <Btn $orange>{mix("뉴")}</Btn>
            <Group>
              <Spin $w={20}>
                <button aria-label="위"><Icon n="up" s={12} /></button>
                <button aria-label="아래"><Icon n="down" s={12} /></button>
              </Spin>
              <Btn $w={11} aria-label="더보기"><Icon n="dots" s={14} /></Btn>
            </Group>
            <Spacer />
            <Btn $w={113} $left $corner><Badge>{mix("신")}</Badge>{mix("위메이드")}</Btn>
            <Btn><b>i</b></Btn>
            <Group $l={1}>
              {["일", "주", "월", "분", "틱", "년"].map((t) => <Seg key={t} $on={t === "주"}>{mix(t)}</Seg>)}
            </Group>
            <Group>
              {["1", "3", "5", "10", "30", "60"].map((t) => <Seg key={t}>{t}</Seg>)}
            </Group>
            <Group $l={1}>
              <NumSelect aria-label="주기" defaultValue="1"><option>1</option></NumSelect>
              <Btn $w={18} aria-label="주기 선택"><Icon n="chev" /></Btn>
            </Group>
            <Group $l={1} $r={1}>
              <Field $w={67} defaultValue="2024/04/05" aria-label="날짜" />
              <Btn aria-label="달력"><Icon n="cal" s={14} /></Btn>
            </Group>
            <Btn $dim>{mix("당")}</Btn>
            <Group>
              <SelectedField><input defaultValue="150" aria-label="표시 개수" /></SelectedField>
              <Spin $w={17}>
                <button aria-label="증가"><Icon n="up" s={10} /></button>
                <button aria-label="감소"><Icon n="down" s={10} /></button>
              </Spin>
            </Group>
            <Slash>/</Slash>
            <Field $w={44} $right $color="#444" defaultValue="3000" aria-label="전체 개수" />
            <Spacer />
            <Btn $dim aria-label="구간"><Icon n="wave" /></Btn>
            <Btn $corner aria-label="설정"><Icon n="gear" /></Btn>
            <Btn $w={9} aria-label="도구 더보기"><Icon n="dright" s={12} /></Btn>
          </Toolbar>

          <Body>
            <Sidebar>
              <Tabs>
                <Tab>{mix("종목")}</Tab>
                <Tab $on>{mix("지표")}</Tab>
                <Tab>{mix("전략")}</Tab>
              </Tabs>
              <SearchRow>
                <Field $w={122} placeholder="스마트 검색" aria-label="스마트 검색" />
                <Btn aria-label="검색"><Icon n="search" /></Btn>
                <Btn aria-label="펼치기"><Icon n="ddown" /></Btn>
              </SearchRow>
              <Section $open><Icon n="folderM" s={15} /><span>{mix("유형")}</span></Section>
              <Tree>
                <TreeHead>{mix("차트유형")}</TreeHead>
                {TYPES.map((t, i) => (
                  <Option key={t}>
                    <input type="radio" name="type" defaultChecked={i === 0} />
                    <span>{mix(t)}</span>
                  </Option>
                ))}
              </Tree>
              {["지표", "신호검색", "강세약세", "투자자동향", "관심지표"].map((t) => (
                <Section key={t}><Icon n="folderP" s={15} /><span>{mix(t)}</span></Section>
              ))}
              <Foot>
                <span>{mix("관심지표")}</span>
                <Btn $w={38} $dim>{mix("등록")}</Btn>
                <Btn $w={38} $dim>{mix("삭제")}</Btn>
              </Foot>
            </Sidebar>

            <Main>
              <InfoBar>
                <Quote>
                  <QuoteCell $w={60}>59,200</QuoteCell>
                  <QuoteCell $w={75}><Tri />3,700</QuoteCell>
                  <QuoteCell $w={56}>+6.67%</QuoteCell>
                  <QuoteCell $w={93} $black>2,198,423</QuoteCell>
                </Quote>
                <Head>{mix("시")}</Head><Val>57,500</Val>
                <Head>{mix("고")}</Head><Val>62,100</Val>
                <Head>{mix("저")}</Head><Val>57,400</Val>
                <Head $w={58}>{mix("체결강도")}</Head>
                <Strength>91.48</Strength>
                <span>{mix("[주]")}</span>
                <Actions>
                  <Btn $h={18} aria-label="설정"><Icon n="gear" s={15} /></Btn>
                  <Order $c="#d03030">{mix("매수")}</Order>
                  <Order $c="#2048d8">{mix("매도")}</Order>
                  <Mini>
                    <button aria-label="최대화"><Icon n="box" s={7} /></button>
                    <button aria-label="닫기"><Icon n="x" s={7} /></button>
                  </Mini>
                </Actions>
              </InfoBar>
              <ChartArea>
                <Chart />
                <PaneBtns $right="37px" $top={-1}><button>L</button><button>I</button><button>R</button></PaneBtns>
                <PaneBtns $right="0px" $top={-1}><button aria-label="최대화"><Icon n="box" s={8} /></button></PaneBtns>
                <PaneBtns $right="46px" $top={607}><button>L</button><button>I</button></PaneBtns>
                <PaneBtns $right="0px" $top={607}>
                  <button aria-label="최대화"><Icon n="box" s={8} /></button>
                  <button aria-label="닫기"><Icon n="x" s={8} /></button>
                </PaneBtns>
              </ChartArea>
              <ScrollRow>
                <ScrollBtn aria-label="왼쪽"><Icon n="left" s={14} /></ScrollBtn>
                <Track><Thumb /></Track>
                <ScrollBtn aria-label="오른쪽"><Icon n="right" s={14} /></ScrollBtn>
                {["first", "pause", "last"].map((n) => <ToolBtn key={n} aria-label={n}><Icon n={n} s={14} /></ToolBtn>)}
                <SlideWrap><input type="range" defaultValue="3" aria-label="확대" /></SlideWrap>
                {BOTTOM.map((n) => (
                  <ToolBtn key={n} aria-label={n} $on={n === "table" || n === "cross"}><Icon n={n} s={14} /></ToolBtn>
                ))}
              </ScrollRow>
            </Main>

            <Rail>
              <RailBtn aria-label="refresh"><Icon n="refresh" /></RailBtn>
              <RailBtn aria-label="gear"><Icon n="gear" /></RailBtn>
              <RailLine />
              {RAIL.map((n) => (
                <RailBtn key={n} aria-label={n} $on={n === "magi"}><Icon n={n} /></RailBtn>
              ))}
            </Rail>
          </Body>
        </Window>
        <RightEdge />
      </Desktop>
    </>
  );
}
